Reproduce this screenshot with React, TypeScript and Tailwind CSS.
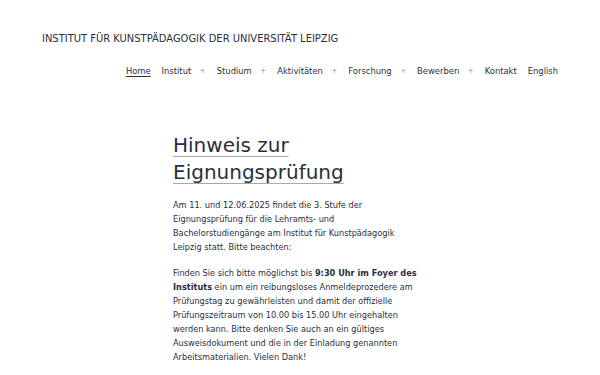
const navItems: { label: string; plus?: boolean; active?: boolean }[] = [
  { label: 'Home', active: true },
  { label: 'Institut', plus: true },
  { label: 'Studium', plus: true },
  { label: 'Aktivitäten', plus: true },
  { label: 'Forschung', plus: true },
  { label: 'Bewerben', plus: true },
  { label: 'Kontakt' },
  { label: 'English' },
];

export default function App() {
  return (
    <div className="min-h-screen bg-white text-[#28303d]" style={{ fontFamily: '"DejaVu Sans", sans-serif' }}>
      <header className="pl-[42px] pr-[42px] pt-[33px]">
        <div className="text-[9.95px] leading-[12px] text-[#28303d]">
          INSTITUT FÜR KUNSTPÄDAGOGIK DER UNIVERSITÄT LEIPZIG
        </div>
        <nav className="mt-[20px] flex justify-end">
          <ul className="flex items-center text-[8.4px] leading-[12px]">
            {navItems.map(item => (
              <li key={item.label} className="flex items-center mr-[11px] last:mr-0">
                <a className={item.active ? 'underline underline-offset-2' : ''}>{item.label}</a>
                {item.plus && <span className="ml-[8.6px] text-[7px] text-[#8a8f96]">+</span>}
              </li>
            ))}
          </ul>
        </nav>
      </header>

      <main className="w-[249px] pt-[55px] ml-[173px]">
        <h1 className="text-[20px] leading-[27px] text-[#28303d] underline decoration-[#aaaaaa] decoration-1 underline-offset-[4px]">
          Hinweis zur Eignungsprüfung
        </h1>
        <p className="mt-[12px] text-[8.2px] leading-[14px]">
          Am 11. und 12.06.2025 findet die 3. Stufe der Eignungsprüfung für die Lehramts- und
          Bachelorstudiengänge am Institut für Kunstpädagogik Leipzig statt. Bitte beachten:
        </p>
        <p className="mt-[12px] text-[8.2px] leading-[14px]">
          Finden Sie sich bitte möglichst bis <strong className="font-bold">9:30 Uhr im Foyer des Instituts</strong> ein
          um ein reibungsloses Anmeldeprozedere am Prüfungstag zu gewährleisten und damit der offizielle
          Prüfungszeitraum von 10.00 bis 15.00 Uhr eingehalten werden kann. Bitte denken Sie auch an ein
          gültiges Ausweisdokument und die in der Einladung genannten Arbeitsmaterialien. Vielen Dank!
        </p>
      </main>
    </div>
  );
}
